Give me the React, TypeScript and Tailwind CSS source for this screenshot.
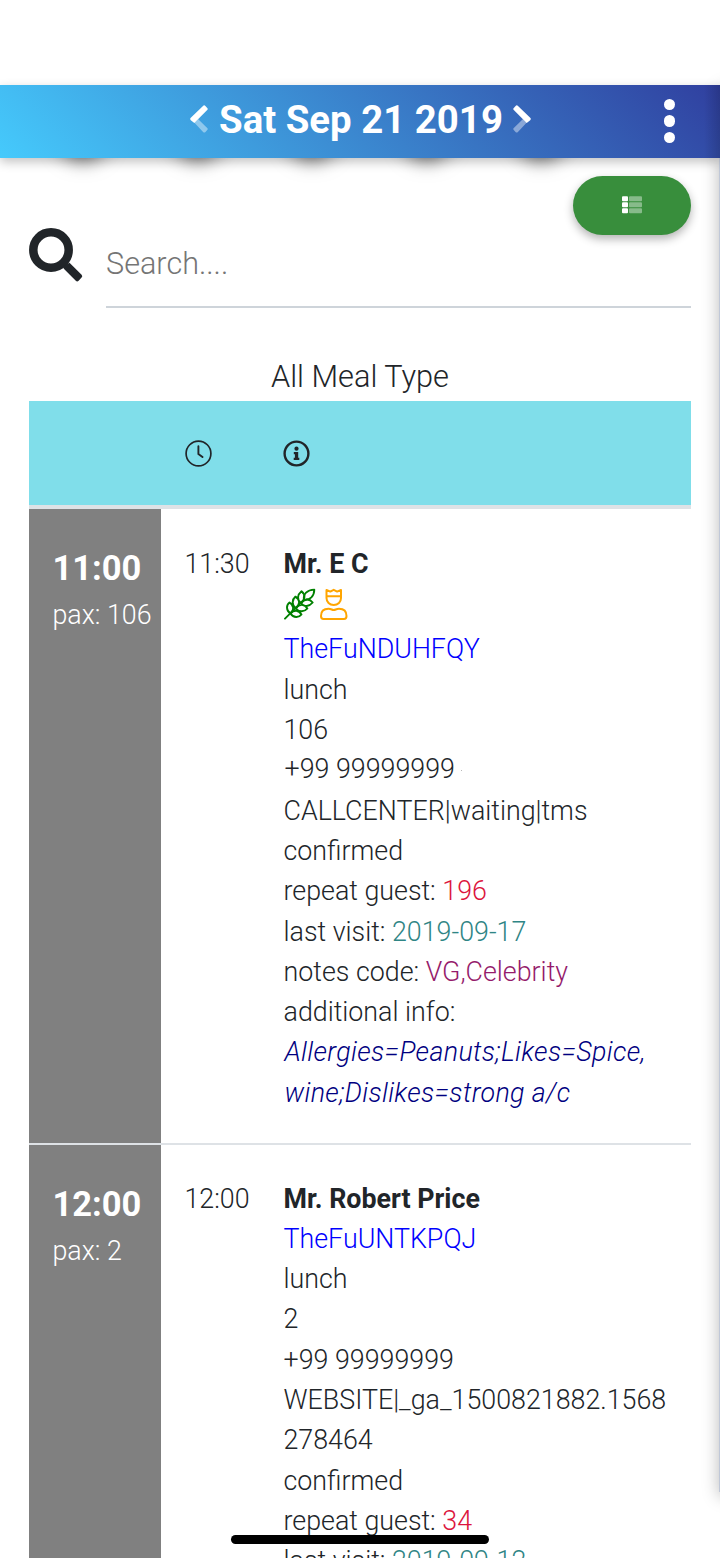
import React from "react";

function Wheat() {
  return (
    <svg viewBox="0 0 32 32" className="h-8 w-8" fill="none" stroke="#008000" strokeWidth="1.9" strokeLinecap="round" strokeLinejoin="round">
      <path d="M1 30.7 L11 20.7 L20 11.7" />
      <path d="M20 11.6 C19 6 23 2 30.3 1.6 C30.3 8 26 12.6 20 11.6Z" />
      <path d="M17 15 C12.5 12 13.5 6.5 17.5 3.2 C22 7 21 11.5 17 15Z M11.8 20.2 C7.4 17 8 11.5 11.5 8.6 C16.5 12 16 16.5 11.8 20.2Z M6.5 25.5 C1.8 22.5 2.2 17 5.5 14.5 C10 17.5 10.5 21.5 6.5 25.5Z" />
      <path d="M17 15 C20 19.5 25.4 18.5 28.7 14.5 C25 10 20.5 11 17 15Z M11.8 20.2 C15 24.6 20.5 24 23.4 20.5 C20 15.5 15.5 16 11.8 20.2Z M6.5 25.5 C9.5 30.2 15 29.8 17.5 26.5 C14.5 22 10.5 21.5 6.5 25.5Z" />
    </svg>
  );
}

function Crown() {
  return (
    <svg viewBox="0 0 28 32" className="h-8 w-7" fill="none" stroke="#ffa500" strokeWidth="2" strokeLinejoin="round" strokeLinecap="round">
      <path d="M6.5 8.3 V2 L10.3 3.6 L13.7 1.8 L17.2 3.6 L21 2 V10 C21 14 18 17 13.7 17 C9.5 17 6.5 14 6.5 10 V8.3 H21" />
      <path d="M8.5 20.8 C11.5 20.8 11.7 22 13.7 22 C15.7 22 16 20.8 19 20.8 C24 20.8 26.5 23.8 26.5 28 C26.5 30 26 31 24 31 H3.5 C1.5 31 1 30 1 28 C1 23.8 3.5 20.8 8.5 20.8Z" />
    </svg>
  );
}

function Clock() {
  return (
    <svg viewBox="0 0 27 27" className="size-[27px]" fill="none" stroke="#212529">
      <circle cx="13.5" cy="13.5" r="12.4" strokeWidth="1.7" />
      <path d="M13.4 6.2 V14 L17.5 17.1" strokeWidth="1.9" strokeLinecap="round" />
    </svg>
  );
}

function Info() {
  return (
    <svg viewBox="0 0 27 27" className="size-[27px]" fill="#212529">
      <circle cx="13.5" cy="13.5" r="11.9" fill="none" stroke="#212529" strokeWidth="2.4" />
      <circle cx="13.5" cy="8.7" r="2.1" />
      <path d="M10.8 12h4.4v5.7h1.1v2.3h-5.6v-2.3h1.2v-3.4h-1.1z" />
    </svg>
  );
}

function Chevron({ className }: { className: string }) {
  return (
    <svg viewBox="0 0 18 28" className={className} fill="white">
      <path d="M4.2 17.6 L8 13.9 L17.2 22.9 Q18.3 24 17.2 25.1 L15.5 27 Q14.3 28.1 13.1 27 Z" fillOpacity=".42" />
      <path d="M13 .9 Q14.2 -.2 15.4 .9 L17.2 2.9 Q18.3 4 17.2 5.1 L4.3 17.9 L.8 15.2 Q-.4 14 .8 12.8 Z" />
    </svg>
  );
}

function ListIcon() {
  return (
    <svg viewBox="0 0 20 18" className="h-[18px] w-5" fill="white">
      {[0, 6, 12].map((y) => (
        <g key={y}>
          <rect x="0" y={y + 0.3} width="6" height="5" rx="1" />
          <rect x="7" y={y + 0.3} width="13" height="5" rx="1" opacity=".4" />
        </g>
      ))}
    </svg>
  );
}

function Line({ children, className = "" }: { children: React.ReactNode; className?: string }) {
  return <div className={`h-[40.3px] whitespace-nowrap leading-[40.3px] ${className}`}>{children}</div>;
}

function Slot({ time, pax }: { time: string; pax: string }) {
  return (
    <div className="bg-[#808080] pl-[23.5px] pt-[33px] text-white">
      <div className="h-[52px] text-[34.5px] font-bold leading-[52px]">{time}</div>
      <div className="whitespace-nowrap leading-[43px]">{pax}</div>
    </div>
  );
}

export default function App() {
  return (
    <div className="relative h-[1558px] w-[720px] overflow-hidden bg-white font-['Roboto',sans-serif] text-[26.82px] font-light text-[#212529]">
      <div className="absolute left-[719px] top-[85px] h-[1407px] w-24 bg-[#c0c8d8] shadow-[0_4px_16px_rgba(0,0,0,0.28)]" />
      <div className="absolute left-0 top-[118px] flex w-[720px] gap-[84.5px] pl-[68px]">
        {[0, 1, 2, 3, 4].map((n) => (
          <div key={n} className="size-[30px] shrink-0 rounded-full shadow-[0_3px_20px_9px_rgba(0,0,0,0.6)]" />
        ))}
      </div>

      <div className="h-[84.5px]" />
      <header className="relative flex h-[73px] items-center bg-[linear-gradient(45deg,#45cafc,#303f9f)] pl-[190px] text-white shadow-[0_4px_10px_rgba(0,0,0,0.24)]">
        <Chevron className="mb-[4.5px] h-7 w-[18px] shrink-0" />
        <h1 className="ml-[11px] w-[284px] shrink-0 whitespace-nowrap pb-[1px] text-[38.4px] font-bold leading-none">Sat Sep 21 2019</h1>
        <Chevron className="mb-[4.5px] ml-[9.5px] h-7 w-[18px] shrink-0 -scale-x-100" />
        <div className="ml-[133px] flex shrink-0 flex-col gap-[5px]">
          <i className="size-[11.5px] rounded-full bg-white" />
          <i className="size-[11.5px] rounded-full bg-white" />
          <i className="size-[11.5px] rounded-full bg-white" />
        </div>
        <div className="absolute right-0 top-0 h-full w-4 bg-linear-to-r from-transparent to-black/15" />
      </header>

      <main className="relative px-[29px] pt-[18px]">
        <div className="flex justify-end">
          <button className="flex h-[59.5px] w-[118px] items-center justify-center rounded-full bg-[#388e3c] shadow-[0_4px_10px_rgba(0,0,0,0.3)]">
            <ListIcon />
          </button>
        </div>
        <div className="-mt-[7px] flex h-[80px]">
          <svg viewBox="0 0 54 54" className="size-[54px] shrink-0" fill="#212529">
            <circle cx="22" cy="22" r="17.7" fill="none" stroke="#212529" strokeWidth="8.5" />
            <path d="M40.5 34.7 L52.6 46.8 Q54 48.2 52.6 49.6 L49.6 52.8 Q48.2 54 46.8 52.8 L34.8 40.8 Q34 39.7 34.8 38 Z" />
          </svg>
          <div className="ml-[23px] grow border-b-2 border-[#ced4da] pt-[18px] text-[30.6px] leading-[36px] text-[#757575]">Search....</div>
        </div>
        <div className="mt-[46px] h-[46.5px] text-center text-[30.72px] leading-[46px]">All Meal Type</div>
        <div className="grid h-[108px] grid-cols-[132px_99.5px_1fr] items-center border-b-[4px] border-[#dee2e6] bg-[#80deea]">
          <span />
          <span className="pl-[23.5px] pt-[1px]"><Clock /></span>
          <span className="pl-[22.5px] pt-[1px]"><Info /></span>
        </div>

        <div className="grid h-[636px] grid-cols-[132px_99.5px_1fr] border-b-2 border-[#dee2e6]">
          <Slot time="11:00" pax="pax: 106" />
          <div className="pl-[23.5px] pt-[35px]"><Line>11:30</Line></div>
          <div className="pl-[23px] pt-[35px]">
            <Line className="font-bold">Mr. E C</Line>
            <div className="flex h-[45.7px] gap-[4px] pt-[4px]"><Wheat /><Crown /></div>
            <Line className="text-[#0000ff]">TheFuNDUHFQY</Line>
            <Line>lunch</Line>
            <Line>106</Line>
            <Line className="flex items-center">
              <span className="-mt-[3px] pl-px">+99 99999999</span>
              <i className="ml-[6px] size-[1.5px] bg-[#b8b8b8]" />
            </Line>
            <Line>CALLCENTER|waiting|tms</Line>
            <Line>confirmed</Line>
            <Line>repeat guest: <span className="text-[#dc143c]">196</span></Line>
            <Line>last visit: <span className="text-[#2f8585]">2019-09-17</span></Line>
            <Line>notes code: <span className="text-[#951b6b]">VG,Celebrity</span></Line>
            <Line>additional info:</Line>
            <Line className="pl-px italic tracking-[0.37px] text-[#000080]">Allergies=Peanuts;Likes=Spice,</Line>
            <Line className="pl-px italic tracking-[0.37px] text-[#000080]">wine;Dislikes=strong a/c</Line>
          </div>
        </div>

        <div className="grid h-[636px] grid-cols-[132px_99.5px_1fr]">
          <Slot time="12:00" pax="pax: 2" />
          <div className="pl-[23.5px] pt-[34px]"><Line>12:00</Line></div>
          <div className="pl-[23px] pt-[34px]">
            <Line className="font-bold">Mr. Robert Price</Line>
            <Line className="text-[#0000ff]">TheFuUNTKPQJ</Line>
            <Line>lunch</Line>
            <Line>2</Line>
            <Line>+99 99999999</Line>
            <Line>WEBSITE|_ga_1500821882.1568</Line>
            <Line>278464</Line>
            <Line>confirmed</Line>
            <Line>repeat guest: <span className="text-[#dc143c]">34</span></Line>
            <Line>last visit: <span className="text-[#2f8585]">2019-09-12</span></Line>
          </div>
        </div>
      </main>
      <div className="absolute left-[231px] top-[1535px] h-[9px] w-[258px] rounded-full bg-black" />
    </div>
  );
}
